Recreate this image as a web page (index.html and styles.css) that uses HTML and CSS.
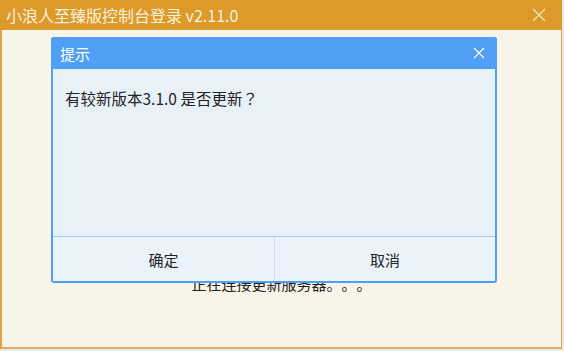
FILE: index.html
```html
<!DOCTYPE html>
<html lang="zh-CN">
<head>
    <meta charset="UTF-8">
    <title>小浪人至臻版控制台登录</title>
    <link rel="stylesheet" href="styles.css">
</head>
<body>
    <div class="window">
        <div class="titlebar">
            <span class="title">小浪人至臻版控制台登录 v2.11.0</span>
            <svg class="win-close" width="14" height="14" viewBox="0 0 14 14">
                <path d="M1 1L13 13M13 1L1 13" stroke="#f6e3bf" stroke-width="1.3" fill="none"/>
            </svg>
        </div>
        <div class="content">
            <p class="status">正在连接更新服务器。。。</p>
        </div>
    </div>

    <div class="dialog">
        <div class="dialog-header">
            <span class="dialog-title">提示</span>
            <svg class="dialog-close" width="12" height="12" viewBox="0 0 12 12">
                <path d="M1 1L11 11M11 1L1 11" stroke="#ffffff" stroke-width="1.2" fill="none"/>
            </svg>
        </div>
        <div class="dialog-body">
            <p class="message">有较新版本3.1.0 是否更新<span class="punct" lang="ja">？</span></p>
        </div>
        <div class="dialog-footer">
            <button class="dialog-btn">确定</button>
            <button class="dialog-btn">取消</button>
        </div>
    </div>
</body>
</html>
```

FILE: styles.css
```css
body {
    margin: 0;
    background-color: #e9e9e9;
    font-family: "Noto Sans CJK SC", "DejaVu Sans", sans-serif;
    color: #222;
    overflow: hidden;
    position: relative;
    text-spacing-trim: space-all;
}
.window {
    width: 559px;
    height: 347px;
    background-color: #f8f4e8;
    border-left: 2px solid #e0a447;
    border-right: 1px solid #e0a447;
    border-bottom: 2px solid #e0b060;
    display: flex;
    flex-direction: column;
}
.titlebar {
    height: 30px;
    background-color: #dc9a2b;
    display: flex;
    align-items: center;
    justify-content: space-between;
    padding: 0 16px 0 6px;
    margin-left: -2px;
    margin-right: -1px;
}
.title {
    color: #fbf1de;
    font-size: 16px;
    line-height: 30px;
}
.content {
    flex: 1;
}
.status {
    margin: 0;
    padding-top: 245px;
    text-align: center;
    font-size: 15px;
    line-height: 18px;
    color: #222;
}
.dialog {
    position: absolute;
    left: 51px;
    top: 37px;
    width: 442px;
    height: 244px;
    background-color: #e8f0f8;
    border: 2px solid #4f9ff5;
    border-top: none;
    border-radius: 3px;
    display: flex;
    flex-direction: column;
}
.dialog-header {
    height: 32px;
    margin: 0 -2px;
    background-color: #4f9ff5;
    border-radius: 3px 3px 0 0;
    display: flex;
    align-items: center;
    justify-content: space-between;
    padding: 0 12px 0 9px;
}
.dialog-title {
    color: #ffffff;
    font-size: 15px;
}
.dialog-body {
    flex: 1;
}
.message {
    margin: 0;
    padding: 20px 0 0 12px;
    font-size: 15.5px;
    line-height: 18px;
    color: #222;
}
.punct {
    font-family: "Noto Sans CJK JP", sans-serif;
}
.dialog-footer {
    height: 44px;
    border-top: 1px solid #a9ccf2;
    background-color: #eaf2fa;
    display: grid;
    grid-template-columns: 1fr 1fr;
}
.dialog-btn {
    background: none;
    border: none;
    font-family: inherit;
    font-size: 15px;
    color: #222;
    padding: 0;
    cursor: pointer;
}
.dialog-btn + .dialog-btn {
    border-left: 1px solid #cfe0f3;
}
```
